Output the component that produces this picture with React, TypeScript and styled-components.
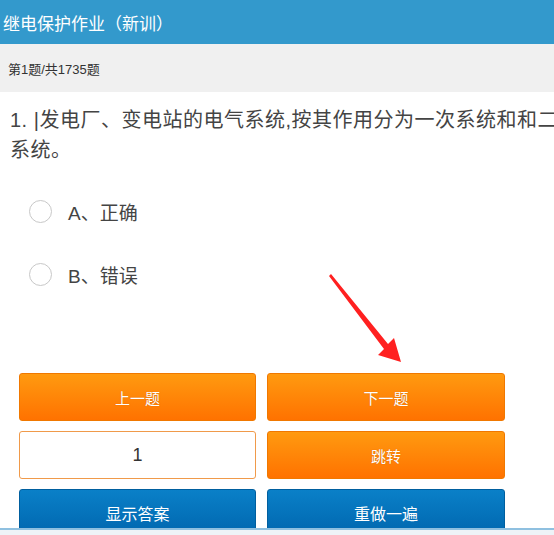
import React from 'react'
import styled, { createGlobalStyle } from 'styled-components'

const GlobalStyle = createGlobalStyle`
  html, body {
    margin: 0;
    padding: 0;
    background: #ffffff;
    overflow: hidden;
  }
  body {
    font-family: 'Liberation Sans', 'Noto Sans CJK SC', sans-serif;
  }
`

const Page = styled.div`
  width: 554px;
  height: 535px;
  overflow: hidden;
  position: relative;
`

const Header = styled.div`
  height: 44px;
  background-color: #3399cc;
  color: #ffffff;
  font-size: 17px;
  display: flex;
  align-items: center;
  padding-left: 3px;
`

const SubBar = styled.div`
  height: 48px;
  background-color: #f0f0f0;
  color: #333333;
  font-size: 13px;
  display: flex;
  align-items: center;
  padding-left: 8px;
`

const Question = styled.div`
  padding: 13px 0 0 10px;
  color: #444444;
  font-size: 20px;
  line-height: 30px;
  letter-spacing: 0.5px;
`

const QuestionLine = styled.div`
  white-space: nowrap;
`

const Options = styled.div`
  margin-top: 15px;
  display: flex;
  flex-direction: column;
`

const Option = styled.label`
  height: 63px;
  display: flex;
  align-items: center;
  padding-left: 29px;
  color: #444444;
  font-size: 19px;
  cursor: pointer;
`

const Radio = styled.span`
  width: 21px;
  height: 21px;
  border-radius: 50%;
  border: 1px solid #c8c8c8;
  background: #ffffff;
  margin-right: 16px;
  flex-shrink: 0;
`

const Controls = styled.div`
  margin-top: 67px;
  padding-left: 19px;
  display: grid;
  grid-template-columns: 237px 238px;
  column-gap: 11px;
  row-gap: 10px;
`

const Button = styled.button<{ $tone: 'orange' | 'blue' }>`
  height: 48px;
  border-radius: 3px;
  color: #ffffff;
  font-family: inherit;
  font-size: ${p => (p.$tone === 'orange' ? '15px' : '16px')};
  cursor: pointer;
  border: 1px solid ${p => (p.$tone === 'orange' ? '#f07800' : '#005f9f')};
  background: ${p =>
    p.$tone === 'orange'
      ? 'linear-gradient(#ff9a10, #ff7200)'
      : 'linear-gradient(#0a80c8, #0066ae)'};
  text-shadow: ${p => (p.$tone === 'orange' ? '0 0 1px #c86000' : 'none')};
`

const JumpInput = styled.input`
  height: 48px;
  box-sizing: border-box;
  border: 1px solid #f09a4a;
  border-radius: 3px;
  text-align: center;
  font-family: inherit;
  font-size: 18px;
  color: #333333;
  outline: none;
`

const BottomStrip = styled.div`
  position: absolute;
  left: 0;
  right: 0;
  bottom: 0;
  height: 5px;
  background: #eef3f7;
  border-top: 2px solid #8fc0e0;
`

const Pointer = styled.svg`
  position: absolute;
  left: 326px;
  top: 272px;
  pointer-events: none;
`

export default function App() {
  return (
    <Page>
      <GlobalStyle />
      <Header>继电保护作业（新训）</Header>
      <SubBar>第1题/共1735题</SubBar>
      <Question>
        <QuestionLine>1. |发电厂、变电站的电气系统,按其作用分为一次系统和和二次</QuestionLine>
        <QuestionLine>系统。</QuestionLine>
      </Question>
      <Options>
        <Option>
          <Radio />
          A、正确
        </Option>
        <Option>
          <Radio />
          B、错误
        </Option>
      </Options>
      <Controls>
        <Button $tone="orange">上一题</Button>
        <Button $tone="orange">下一题</Button>
        <JumpInput defaultValue="1" />
        <Button $tone="orange">跳转</Button>
        <Button $tone="blue">显示答案</Button>
        <Button $tone="blue">重做一遍</Button>
      </Controls>
      <Pointer width="80" height="95" viewBox="0 0 80 95">
        <polygon points="3,4 5,2 62,72 68,66 75,90 52,83 58,77" fill="#ff2020" />
      </Pointer>
      <BottomStrip />
    </Page>
  )
}
